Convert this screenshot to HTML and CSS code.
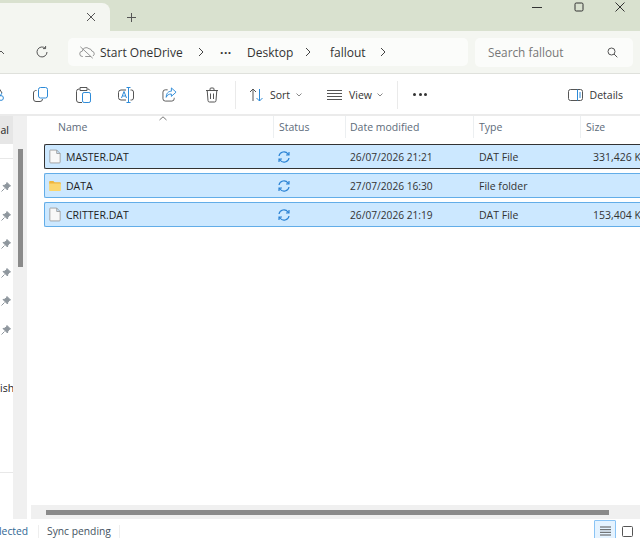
FILE: index.html
```html
<!DOCTYPE html>
<html lang="en">
  <head>
    <meta charset="UTF-8" />
    <title>fallout - File Explorer</title>
    <link rel="stylesheet" href="styles.css">
  </head>
  <body>
    <div class="window">
      <!-- title bar -->
      <div class="titlebar">
        <div class="tab">
          <svg class="tab-close" width="10" height="10" viewBox="0 0 10 10"><path d="M1 1l8 8M9 1l-8 8" /></svg>
        </div>
        <svg class="tab-new" width="11" height="11" viewBox="0 0 11 11"><path d="M5.5 1v9M1 5.5h9" /></svg>
        <div class="win-buttons">
          <svg width="10" height="10" viewBox="0 0 10 10"><path d="M0 5.5h10" /></svg>
          <svg width="10" height="10" viewBox="0 0 10 10"><rect x="1" y="1" width="8" height="8" rx="1.2" /></svg>
          <svg width="10" height="10" viewBox="0 0 10 10"><path d="M0.5 0.5l9 9M9.5 0.5l-9 9" /></svg>
        </div>
      </div>

      <!-- address row -->
      <div class="address-row">
        <svg class="nav-up" width="6" height="6" viewBox="0 0 6 6"><path d="M-2 5l3-3 3 3" /></svg>
        <svg class="nav-refresh" width="14" height="14" viewBox="0 0 14 14"><path d="M12 7a5 5 0 1 1-1.6-3.7M10.6 1v2.6H8" /></svg>
        <div class="address">
          <svg class="cloud-off" width="16" height="15" viewBox="0 0 18 16"><path d="M4.5 12.5H4a3 3 0 0 1-.3-6 4.5 4.5 0 0 1 7.5-2.8 3.6 3.600 0 0 1 3.200 2.700 3 3 0 0 1 1.200 5.600M7 12.500h6.500M1.500 1.500l14 13" /></svg>
          <span class="crumb crumb-od">Start OneDrive</span>
          <svg class="chev" width="6" height="10" viewBox="0 0 6 10"><path d="M1 1l4 4-4 4" /></svg>
          <span class="crumb crumb-dots">&middot;&middot;&middot;</span>
          <span class="crumb crumb-desk">Desktop</span>
          <svg class="chev" width="6" height="10" viewBox="0 0 6 10"><path d="M1 1l4 4-4 4" /></svg>
          <span class="crumb crumb-fall">fallout</span>
          <svg class="chev" width="6" height="10" viewBox="0 0 6 10"><path d="M1 1l4 4-4 4" /></svg>
        </div>
        <div class="search">
          <span>Search fallout</span>
          <svg width="11" height="11" viewBox="0 0 11 11"><circle cx="4.500" cy="4.500" r="3.500" /><path d="M7 7l3.300 3.300" /></svg>
        </div>
      </div>

      <!-- command bar -->
      <div class="commandbar">
        <svg class="cmd cmd-cut" width="8" height="20" viewBox="0 0 8 20"><path d="M-3 0l5 8" /><path class="blue" d="M2 8l-2 3" /><circle class="blue" cx="1" cy="13" r="2.400" /></svg>
        <svg class="cmd cmd-copy" width="15" height="15" viewBox="0 0 15 15"><path d="M3.500 3.500A2.500 2.500 0 0 0 .5 6v6a2.500 2.500 0 0 0 2.500 2.500h4a2.500 2.500 0 0 0 2.500-2.500" /><rect class="blue" x="5.500" y=".5" width="9" height="10.500" rx="2" /></svg>
        <svg class="cmd cmd-paste" width="15" height="16" viewBox="0 0 15 16"><path d="M3.500 2H3A2.500 2.500 0 0 0 .5 4.500v8.500A2.500 2.500 0 0 0 3 15.500h3M11.500 2h.5a2.500 2.500 0 0 1 2 1.500M4 .5h7v3H4z" /><rect class="blue" x="6.500" y="5.500" width="8" height="10" rx="1.600" /></svg>
        <svg class="cmd cmd-rename" width="16" height="16" viewBox="0 0 16 16"><path d="M8 3H3a2.500 2.500 0 0 0-2.500 2.500v5A2.500 2.500 0 0 0 3 13h5M12.500 3h1A2 2 0 0 1 15.500 5v6a2 2 0 0 1-2 2h-1" /><path class="blue" d="M10.500 .5v15M8.500 .5h4M8.500 15.500h4M3.500 11l2.500-6.500 2.500 6.500M4.500 9h3" /></svg>
        <svg class="cmd cmd-share" width="15" height="15" viewBox="0 0 16 16"><path d="M6 3H3.500A2.500 2.500 0 0 0 1 5.500v7A2.500 2.500 0 0 0 3.500 15h7a2.500 2.500 0 0 0 2.500-2.500v-1" /><path class="blue" d="M10 1l5 4.500L10 10V7.500c-3 0-4.500 1-5.500 3.500 0-4 2-6.500 5.500-6.500z" /></svg>
        <svg class="cmd cmd-del" width="14" height="16" viewBox="0 0 14 16"><path d="M1 3.500h12M5 3.500V2a1 1 0 0 1 1-1h2a1 1 0 0 1 1 1v1.500M2.200 3.500l.8 10a1.500 1.500 0 0 0 1.500 1.500h5a1.500 1.500 0 0 0 1.500-1.500l.8-10M5.500 6.500v5.500M8.500 6.500v5.500" /></svg>
        <span class="cmd-sep sep-a"></span>
        <svg class="cmd cmd-sort" width="15" height="14" viewBox="0 0 15 14"><path d="M4 13V1M1 4l3-3 3 3" /><path class="blue" d="M10.500 1v12M7.500 10l3 3 3-3" /></svg>
        <span class="cmd-label label-sort">Sort</span>
        <svg class="caret caret-sort" width="6" height="4" viewBox="0 0 6 4"><path d="M0.500 0.500L3 3l2.500-2.500" /></svg>
        <svg class="cmd cmd-view" width="15" height="10" viewBox="0 0 15 10"><path d="M0 0.500h15M0 3.500h15M0 6.500h15M0 9.500h15" /></svg>
        <span class="cmd-label label-view">View</span>
        <svg class="caret" width="6" height="4" viewBox="0 0 6 4"><path d="M0.500 0.500L3 3l2.500-2.500" /></svg>
        <span class="cmd-sep sep-b"></span>
        <span class="more"><i></i><i></i><i></i></span>
        <svg class="cmd cmd-details" width="15" height="12" viewBox="0 0 15 12"><rect x="0.500" y="0.500" width="14" height="11" rx="2" /><path class="blue" d="M9.500 0.500v11M12 3v6" /></svg>
        <span class="cmd-label label-details">Details</span>
      </div>

      <!-- main area -->
      <div class="main">
        <aside class="sidebar">
          <div class="nav-list">
            <div class="nav-active">al</div>
            <hr class="nav-rule" />
            <svg class="pin" width="10" height="10" viewBox="0 0 10 10"><path d="M6 0.500L9.500 4 8.500 4.500 6.800 6 6.500 8 2 3.500 4 3.200 5.500 1.500zM3.500 6.500L0.500 9.500" /></svg>
            <svg class="pin" width="10" height="10" viewBox="0 0 10 10"><path d="M6 0.500L9.500 4 8.500 4.500 6.800 6 6.500 8 2 3.500 4 3.200 5.500 1.500zM3.500 6.500L0.500 9.500" /></svg>
            <svg class="pin" width="10" height="10" viewBox="0 0 10 10"><path d="M6 0.500L9.500 4 8.500 4.500 6.800 6 6.500 8 2 3.500 4 3.200 5.500 1.500zM3.500 6.500L0.500 9.500" /></svg>
            <svg class="pin" width="10" height="10" viewBox="0 0 10 10"><path d="M6 0.500L9.500 4 8.500 4.500 6.800 6 6.500 8 2 3.500 4 3.200 5.500 1.500zM3.500 6.500L0.500 9.500" /></svg>
            <svg class="pin" width="10" height="10" viewBox="0 0 10 10"><path d="M6 0.500L9.500 4 8.500 4.500 6.800 6 6.500 8 2 3.500 4 3.200 5.500 1.500zM3.500 6.500L0.500 9.500" /></svg>
            <svg class="pin" width="10" height="10" viewBox="0 0 10 10"><path d="M6 0.500L9.500 4 8.500 4.500 6.800 6 6.500 8 2 3.500 4 3.200 5.500 1.500zM3.500 6.500L0.500 9.500" /></svg>
            <div class="nav-text">ish</div>
            <hr class="nav-rule nav-rule-low" />
          </div>
          <div class="side-scroll"><span class="side-thumb"></span></div>
        </aside>

        <section class="files">
          <div class="columns">
            <svg class="sort-arrow" width="8" height="5" viewBox="0 0 8 5"><path d="M0.500 4L4 0.800 7.500 4" /></svg>
            <div class="col col-name">Name</div>
            <div class="col col-status">Status</div>
            <div class="col col-date">Date modified</div>
            <div class="col col-type">Type</div>
            <div class="col col-size">Size</div>
          </div>

          <div class="rows">
            <div class="row row-focus">
              <div class="cell-name">
                <svg class="file-icon" width="12" height="15" viewBox="0 0 14 16"><path d="M1.500 0.500h7.500l4 4v10a1 1 0 0 1-1 1h-10a1 1 0 0 1-1-1v-13.500a.5.5 0 0 1 .5-.5zM9 0.500v4h4" /></svg>
                <span>MASTER.DAT</span>
              </div>
              <div class="cell-status"><svg class="sync" width="12" height="12" viewBox="0 0 12 12"><path d="M1 5a5 5 0 0 1 9-2l1 1M11 1v3H8M11 7a5 5 0 0 1-9 2L1 8M1 11V8h3" /></svg></div>
              <div class="cell-date">26/07/2026 21:21</div>
              <div class="cell-type">DAT File</div>
              <div class="cell-size">331,426 KB</div>
            </div>
            <div class="row">
              <div class="cell-name">
                <svg class="folder-icon" width="14" height="10" viewBox="0 0 14 12"><path fill="#eeb53c" d="M0 1a1 1 0 0 1 1-1h4l1.500 1.500H13a1 1 0 0 1 1 1V4H0z" /><path fill="#fbd66e" d="M0 3h14v8a1 1 0 0 1-1 1H1a1 1 0 0 1-1-1z" /></svg>
                <span>DATA</span>
              </div>
              <div class="cell-status"><svg class="sync" width="12" height="12" viewBox="0 0 12 12"><path d="M1 5a5 5 0 0 1 9-2l1 1M11 1v3H8M11 7a5 5 0 0 1-9 2L1 8M1 11V8h3" /></svg></div>
              <div class="cell-date">27/07/2026 16:30</div>
              <div class="cell-type">File folder</div>
              <div class="cell-size"></div>
            </div>
            <div class="row">
              <div class="cell-name">
                <svg class="file-icon" width="12" height="15" viewBox="0 0 14 16"><path d="M1.500 0.500h7.500l4 4v10a1 1 0 0 1-1 1h-10a1 1 0 0 1-1-1v-13.500a.5.5 0 0 1 .5-.5zM9 0.500v4h4" /></svg>
                <span>CRITTER.DAT</span>
              </div>
              <div class="cell-status"><svg class="sync" width="12" height="12" viewBox="0 0 12 12"><path d="M1 5a5 5 0 0 1 9-2l1 1M11 1v3H8M11 7a5 5 0 0 1-9 2L1 8M1 11V8h3" /></svg></div>
              <div class="cell-date">26/07/2026 21:19</div>
              <div class="cell-type">DAT File</div>
              <div class="cell-size">153,404 KB</div>
            </div>
          </div>

          <div class="h-scroll"><span class="h-thumb"></span></div>
        </section>
      </div>

      <!-- status bar -->
      <div class="statusbar">
        <span class="status-sel">lected</span>
        <span class="status-sep"></span>
        <span class="status-sync">Sync pending</span>
        <span class="status-sep"></span>
        <div class="view-toggle">
          <span class="view-btn view-on">
            <svg width="11" height="10" viewBox="0 0 11 10"><path d="M0 1h11M0 3.700h11M0 6.300h11M0 9h11" /></svg>
          </span>
          <span class="view-btn">
            <svg width="11" height="11" viewBox="0 0 11 11"><rect x="0.500" y="0.500" width="10" height="10" rx="1" /></svg>
          </span>
        </div>
      </div>
    </div>
  </body>
</html>
```

FILE: styles.css
```css
html,
body {
  margin: 0;
  padding: 0;
}
body {
  width: 640px;
  height: 538px;
  overflow: hidden;
  font-family: "Open Sans", "Noto Sans", Arial, sans-serif;
  color: #222;
  background: #fff;
}
svg {
  display: block;
  flex: none;
  fill: none;
  stroke: #555;
  stroke-width: 1;
}
svg .blue {
  stroke: #2c8ad8;
}
/* the window runs a few px past the bottom of the screenshot */
.window {
  width: 640px;
  height: 543px;
  display: flex;
  flex-direction: column;
  overflow: hidden;
}

/* title bar */
.titlebar {
  height: 31px;
  flex: none;
  display: flex;
  align-items: flex-start;
  background: #d9e1cf;
}
.tab {
  width: 110px;
  height: 28px;
  margin-top: 3px;
  background: #f4f6f1;
  border-radius: 0 8px 0 0;
  display: flex;
  justify-content: flex-end;
}
.tab-close {
  margin: 9px 14px 0 0;
}
.tab-new {
  margin: 12px 0 0 16px;
}
.win-buttons {
  margin-left: auto;
  display: flex;
  gap: 31.500px;
  padding: 2px 15px 0 0;
  justify-content: flex-end;
}
.win-buttons svg {
  stroke: #333;
}

/* address row */
.address-row {
  height: 42px;
  flex: none;
  display: flex;
  align-items: center;
  background: #f4f6f1;
  border-bottom: 1px solid #dfe1dc;
}
.nav-refresh {
  margin-left: 29px;
}
.address {
  margin-left: 19px;
  width: 400px;
  height: 28px;
  background: #fbfcfa;
  border-radius: 5px;
  display: flex;
  align-items: center;
  font-size: 12px;
  color: #333;
}
.cloud-off {
  margin-left: 11px;
  stroke: #888;
}
.crumb-od {
  margin-left: 5px;
  width: 98px;
}
.chev {
  stroke: #444;
}
.crumb-dots {
  margin-left: 16px;
  font-weight: 700;
  width: 17px;
  letter-spacing: 0.500px;
}
.crumb-desk {
  margin-left: 10px;
  width: 58px;
}
.crumb-fall {
  margin-left: 19px;
  width: 50px;
}
.search {
  margin-left: 7px;
  width: 158px;
  height: 29px;
  box-sizing: border-box;
  background: #fbfcfa;
  border-radius: 5px;
  display: flex;
  align-items: center;
  justify-content: space-between;
  padding: 0 15px 0 13px;
  font-size: 11.800px;
  color: #777;
}

/* command bar */
.commandbar {
  height: 39px;
  padding-top: 1px;
  flex: none;
  display: flex;
  align-items: center;
  background: #fff;
  border-bottom: 2px solid #ebebeb;
}
.cmd-copy {
  margin-left: 25px;
}
.cmd-paste {
  margin-left: 28px;
}
.cmd-rename {
  margin-left: 27px;
}
.cmd-share {
  margin-left: 28px;
}
.cmd-del {
  margin-left: 28px;
}
.cmd-sep {
  width: 1px;
  height: 28px;
  background: #eaeaea;
}
.sep-a {
  margin-left: 16px;
}
.cmd-sort {
  margin-left: 13px;
}
.cmd-label {
  font-size: 10.500px;
  line-height: 16px;
  padding-top: 1px;
  color: #333;
}
.label-sort {
  margin-left: 6px;
  width: 20px;
}
.caret {
  margin-left: 5px;
  stroke: #888;
}
.caret-sort {
  margin-left: 6px;
}
.cmd-view {
  margin-left: 25px;
}
.label-view {
  margin-left: 7px;
  width: 23px;
}
.sep-b {
  margin-left: 14px;
}
.more {
  margin-left: 15px;
  display: flex;
  gap: 2.500px;
}
.more i {
  width: 3px;
  height: 3px;
  border-radius: 50%;
  background: #333;
}
.cmd-details {
  margin-left: auto;
}
.label-details {
  margin: 0 17px 0 7px;
}

/* main */
.main {
  flex: 1;
  min-height: 0;
  display: flex;
}
.sidebar {
  width: 28px;
  flex: none;
  display: flex;
}
.nav-list {
  width: 13px;
  flex: none;
  overflow: hidden;
  display: flex;
  flex-direction: column;
  font-size: 10.500px;
}
.nav-active {
  height: 28px;
  line-height: 28px;
  padding-right: 4px;
  background: #e6e6e6;
  text-align: right;
  color: #222;
}
.nav-rule {
  width: 100%;
  margin: 14px 0 0;
  border: 0;
  border-top: 1px solid #e8e8e8;
}
.nav-rule-low {
  margin-top: 76px;
}
.pin {
  margin: 18.500px 0 0 1px;
  stroke: #8f979e;
  fill: #8f979e;
}
.nav-rule + .pin {
  margin-top: 23px;
}
.nav-text {
  margin-top: 45px;
  text-align: right;
  line-height: 16px;
}
.side-scroll {
  width: 14px;
  flex: none;
  background: #f0f0f0;
  margin-right: 1px;
}
.side-thumb {
  display: block;
  width: 5px;
  height: 118px;
  margin: 33px 0 0 5px;
  background: #8a8a8a;
}
.files {
  flex: 1;
  min-width: 0;
  display: flex;
  flex-direction: column;
  position: relative;
}
.columns {
  height: 28px;
  flex: none;
  display: flex;
  font-size: 10.500px;
  color: #5d6b7a;
}
.col {
  height: 22px;
  line-height: 22px;
  box-sizing: border-box;
  padding-left: 5px;
  border-right: 1px solid #eceff1;
}
.sort-arrow {
  position: absolute;
  left: 131px;
  top: 0;
  stroke: #777;
}
.col-name {
  width: 246px;
  padding-left: 30px;
}
.col-status {
  width: 72px;
}
.col-date {
  width: 128px;
  padding-left: 4px;
}
.col-type {
  width: 107px;
}
.col-size {
  border-right: 0;
}
.rows {
  flex: 1;
  padding-left: 16px;
  display: flex;
  flex-direction: column;
  gap: 4px;
}
.row {
  height: 25px;
  box-sizing: border-box;
  display: flex;
  align-items: center;
  background: #cce8ff;
  border: 1px solid #62ade8;
  border-right: 0;
  border-radius: 2px 0 0 2px;
  font-size: 10.500px;
  color: #222;
}
.row-focus {
  border-color: #333;
}
.cell-name {
  width: 230px;
  display: flex;
  align-items: center;
  box-sizing: border-box;
  padding-left: 3px;
  gap: 4px;
}
.file-icon {
  stroke: #999;
  fill: #f8f8f8;
  margin: 0 1px;
}
.folder-icon {
  stroke: none;
}
.cell-status {
  width: 72px;
  padding-left: 3px;
  box-sizing: border-box;
}
.sync {
  stroke: #2a82d4;
  stroke-width: 1.200;
}
.cell-date {
  width: 128px;
  padding-left: 3px;
  box-sizing: border-box;
  font-size: 10.200px;
  color: #333;
}
.cell-type {
  width: 107px;
  padding-left: 4px;
  box-sizing: border-box;
  color: #333;
}
.cell-size {
  flex: 1;
  white-space: nowrap;
  padding-left: 11px;
  overflow: hidden;
  color: #333;
}
.h-scroll {
  height: 14px;
  margin: 0 0 0 3px;
  flex: none;
  background: #f0f0f0;
  overflow: hidden;
}
.h-thumb {
  display: block;
  height: 5px;
  margin: 5px 0 0 15px;
  width: 563px;
  background: #8a8a8a;
}

/* status bar */
.statusbar {
  height: 24px;
  flex: none;
  display: flex;
  align-items: center;
  font-size: 10.300px;
  color: #44525f;
}
.status-sel {
  width: 38px;
  text-indent: -1px;
  color: #2f6794;
}
.status-sep {
  width: 1px;
  height: 13px;
  background: #eeeeee;
}
.status-sync {
  margin-left: 8px;
  width: 72px;
}
.view-toggle {
  margin-left: auto;
  display: flex;
  padding-right: 2px;
}
.view-btn {
  width: 22px;
  height: 22px;
  display: flex;
  align-items: center;
  justify-content: center;
  box-sizing: border-box;
}
.view-on {
  background: #e5f3ff;
  border: 1px solid #8ac4f5;
  border-radius: 1px;
}
.view-btn svg {
  stroke: #555;
}
```
